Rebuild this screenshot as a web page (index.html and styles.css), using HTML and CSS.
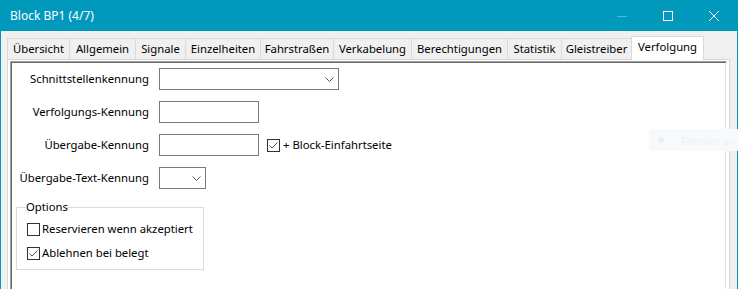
FILE: index.html
```html
<!DOCTYPE html>
<html lang="de">
<head>
    <meta charset="UTF-8">
    <title>Block BP1 (4/7)</title>
    <link rel="stylesheet" href="styles.css">
</head>
<body>
    <div class="window">
        <div class="titlebar">
            <span class="title">Block BP1 (4/7)</span>
            <div class="caption-buttons">
                <span class="cap-btn disabled">
                    <svg width="10" height="10" viewBox="0 0 10 10"><line x1="0" y1="5.5" x2="10" y2="5.5"/></svg>
                </span>
                <span class="cap-btn">
                    <svg width="10" height="10" viewBox="0 0 10 10"><rect x="0.5" y="0.5" width="9" height="9"/></svg>
                </span>
                <span class="cap-btn">
                    <svg width="10" height="10" viewBox="0 0 10 10"><line x1="0" y1="0" x2="10" y2="10"/><line x1="10" y1="0" x2="0" y2="10"/></svg>
                </span>
            </div>
        </div>

        <div class="tabs">
            <div class="tab">Übersicht</div>
            <div class="tab">Allgemein</div>
            <div class="tab">Signale</div>
            <div class="tab">Einzelheiten</div>
            <div class="tab">Fahrstraßen</div>
            <div class="tab">Verkabelung</div>
            <div class="tab">Berechtigungen</div>
            <div class="tab">Statistik</div>
            <div class="tab">Gleistreiber</div>
            <div class="tab active">Verfolgung</div>
        </div>

        <div class="tabpage">
            <div class="panel">
                <div class="form">
                    <label class="lbl">Schnittstellenkennung</label>
                    <div class="combo wide">
                        <svg width="9" height="5" viewBox="0 0 9 5"><polyline points="0.5,0.5 4.5,4.5 8.5,0.5"/></svg>
                    </div>

                    <label class="lbl">Verfolgungs-Kennung</label>
                    <div class="field"><div class="textbox"></div></div>

                    <label class="lbl">Übergabe-Kennung</label>
                    <div class="field">
                        <div class="textbox"></div>
                        <span class="check on block-check">
                            <svg width="11" height="11" viewBox="0 0 11 11"><polyline points="1.5,5.5 4,8 9.5,2.5"/></svg>
                        </span>
                        <span class="check-text">+ Block-Einfahrtseite</span>
                    </div>

                    <label class="lbl">Übergabe-Text-Kennung</label>
                    <div class="combo narrow">
                        <svg width="9" height="5" viewBox="0 0 9 5"><polyline points="0.5,0.5 4.5,4.5 8.5,0.5"/></svg>
                    </div>
                </div>

                <fieldset class="options">
                    <legend>Options</legend>
                    <div class="opt">
                        <span class="check"></span>
                        <span class="check-text">Reservieren wenn akzeptiert</span>
                    </div>
                    <div class="opt">
                        <span class="check on">
                            <svg width="11" height="11" viewBox="0 0 11 11"><polyline points="1.5,5.5 4,8 9.5,2.5"/></svg>
                        </span>
                        <span class="check-text">Ablehnen bei belegt</span>
                    </div>
                </fieldset>
            </div>
        </div>

        <!-- faded notification in the background -->
        <div class="toast">
            <span class="toast-dot"></span>
            <span class="toast-text">Fenster au</span>
        </div>
    </div>
</body>
</html>
```

FILE: styles.css
```css
body {
    margin: 0;
    height: 289px;
    overflow: hidden;
    font-family: "Noto Sans", "Open Sans", sans-serif;
    font-size: 11.3px;
    color: #000;
}

.window {
    position: relative;
    height: 289px;
    background: #f0f0f0;
    border-left: 1px solid #0099bc;
    border-right: 1px solid #0099bc;
}

/* title bar */
.titlebar {
    height: 31px;
    background: #0099bc;
    display: flex;
    align-items: center;
    justify-content: space-between;
    color: #fff;
}

.title {
    padding-left: 9px;
    margin-top: -1px;
    font-size: 12px;
}

.caption-buttons {
    display: flex;
    height: 31px;
}

.cap-btn {
    width: 46px;
    display: flex;
    align-items: center;
    justify-content: center;
}

.cap-btn svg {
    fill: none;
    stroke: #fff;
    stroke-width: 1;
}

.cap-btn.disabled svg {
    stroke: #55b9d3;
}

/* tabs */
.tabs {
    display: flex;
    align-items: flex-end;
    height: 23px;
    margin-top: 5px;
    padding-left: 6px;
}

.tab {
    box-sizing: border-box;
    height: 21px;
    border-top: 1px solid #d9d9d9;
    border-left: 1px solid #d9d9d9;
    display: flex;
    align-items: center;
    justify-content: center;
    padding-bottom: 1px;
    white-space: nowrap;
}

.tab:nth-child(1) { width: 62px; }
.tab:nth-child(2) { width: 66px; }
.tab:nth-child(3) { width: 50px; }
.tab:nth-child(4) { width: 75px; }
.tab:nth-child(5) { width: 73px; }
.tab:nth-child(6) { width: 78px; }
.tab:nth-child(7) { width: 96px; }
.tab:nth-child(8) { width: 54px; }
.tab:nth-child(9) { width: 70px; }

.tab.active {
    position: relative;
    z-index: 1;
    width: 73px;
    height: 24px;
    margin-bottom: -1px;
    background: #fff;
    border-right: 1px solid #d9d9d9;
    padding-bottom: 4px;
}

/* tab page */
.tabpage {
    margin-left: 6px;
    width: 723px;
    box-sizing: border-box;
    height: 260px;
    background: #fff;
    border: 1px solid #d9d9d9;
    padding: 1px 2px 2px 2px;
}

.panel {
    height: 100%;
    box-sizing: border-box;
    border-top: 1px solid #a0a0a0;
    border-left: 1px solid #a0a0a0;
    border-right: 1px solid #fff;
    box-shadow: inset 1px 1px 0 #696969, inset -1px 0 0 #e3e3e3;
    padding: 6px 0 0 2px;
}

.form {
    display: grid;
    grid-template-columns: 136px auto;
    grid-auto-rows: 22px;
    column-gap: 10px;
    row-gap: 11px;
}

.lbl {
    align-self: center;
    text-align: right;
    white-space: nowrap;
    padding-bottom: 1px;
}

.field {
    display: flex;
    align-items: center;
}

.textbox {
    box-sizing: border-box;
    width: 100px;
    height: 22px;
    border: 1px solid #7a7a7a;
    background: #fff;
}

.combo {
    box-sizing: border-box;
    height: 22px;
    border: 1px solid #7a7a7a;
    background: #fff;
    display: flex;
    align-items: center;
    justify-content: flex-end;
    padding-right: 4px;
}

.combo.wide { width: 180px; }
.combo.narrow { width: 47px; }

.combo svg {
    fill: none;
    stroke: #5a5a5a;
    stroke-width: 1;
}

/* checkboxes */
.check {
    box-sizing: border-box;
    width: 13px;
    height: 13px;
    border: 1px solid #333;
    background: #fff;
    display: flex;
    align-items: center;
    justify-content: center;
    flex-shrink: 0;
}

.check svg {
    fill: none;
    stroke: #555;
    stroke-width: 1;
}

.block-check {
    margin-left: 8px;
}

.check-text {
    margin-left: 3px;
    white-space: nowrap;
    padding-bottom: 1px;
}

/* options group */
.options {
    box-sizing: border-box;
    width: 188px;
    height: 71px;
    margin: 10px 0 0 3px;
    padding: 2px 0 4px 10px;
    border: 1px solid #dcdcdc;
    min-width: 0;
}

.options legend {
    padding: 0;
    margin-left: -1px;
    line-height: 16px;
}

.opt {
    height: 24px;
    display: flex;
    align-items: center;
}

.opt .check-text {
    margin-left: 2px;
}

/* background notification */
.toast {
    position: absolute;
    left: 648px;
    top: 129px;
    height: 22px;
    padding-right: 2px;
    background: #f7fafd;
    display: flex;
    align-items: center;
}

.toast-dot {
    width: 6px;
    height: 6px;
    border-radius: 50%;
    background: #f3eded;
    margin-left: 9px;
}

.toast-text {
    margin-left: 17px;
    font-size: 11px;
    color: #eef2f6;
    white-space: nowrap;
}
```
